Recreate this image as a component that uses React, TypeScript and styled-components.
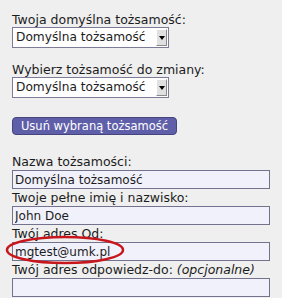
import React from 'react'
import styled, { createGlobalStyle } from 'styled-components'

const GlobalStyle = createGlobalStyle`
  html, body {
    margin: 0;
    padding: 0;
    background: #efefef;
  }
  body {
    font-family: "DejaVu Sans", Verdana, sans-serif;
    font-size: 12.5px;
    color: #1c1c1c;
  }
`

const Form = styled.form`
  position: relative;
  width: 282px;
  height: 298px;
  box-sizing: border-box;
  padding: 13px 0 0 12px;
  overflow: hidden;
`

const Label = styled.label<{ $gap?: number }>`
  display: block;
  line-height: 14px;
  margin-top: ${props => props.$gap ?? 0}px;
  white-space: nowrap;
`

const Hint = styled.em`
  font-style: italic;
`

const SelectBox = styled.div`
  display: flex;
  align-items: center;
  justify-content: space-between;
  width: 157px;
  height: 21px;
  box-sizing: border-box;
  border: 1px solid #7c7c98;
  background: #fff;
  padding: 0 1px 0 3px;
`

const SelectText = styled.span`
  font-size: 12.2px;
  line-height: 19px;
  white-space: nowrap;
`

const ArrowButton = styled.span`
  display: flex;
  align-items: center;
  justify-content: center;
  width: 11px;
  height: 17px;
  box-sizing: border-box;
  background: #e0e0e0;
  border: 1px solid;
  border-color: #ffffff #8a8a8a #8a8a8a #ffffff;

  &::after {
    content: '';
    border-left: 3px solid transparent;
    border-right: 3px solid transparent;
    border-top: 4px solid #000;
  }
`

const Button = styled.button`
  display: block;
  margin-top: 19px;
  width: 165px;
  height: 18px;
  padding: 0;
  border: 1px solid #45457e;
  border-radius: 4px;
  background: #5f5fa9;
  color: #fff;
  font-family: "DejaVu Sans", Verdana, sans-serif;
  font-size: 11.5px;
  line-height: 16px;
  text-align: center;
`

const Field = styled.input`
  display: block;
  margin-top: 1px;
  width: 258px;
  height: 19px;
  box-sizing: border-box;
  border: 1px solid #73738f;
  background: #f1f1fb;
  padding: 0 2px;
  font-family: "DejaVu Sans", Verdana, sans-serif;
  font-size: 12px;
  color: #1c1c1c;
  outline: none;
`

const Circle = styled.svg`
  position: absolute;
  left: 4px;
  top: 234px;
`

const Select = ({ text }: { text: string }) => (
  <SelectBox>
    <SelectText>{text}</SelectText>
    <ArrowButton />
  </SelectBox>
)

export default function App() {
  return (
    <>
      <GlobalStyle />
      <Form>
        <Label>Twoja domyślna tożsamość:</Label>
        <Select text="Domyślna tożsamość" />

        <Label $gap={15}>Wybierz tożsamość do zmiany:</Label>
        <Select text="Domyślna tożsamość" />

        <Button type="button">Usuń wybraną tożsamość</Button>

        <Label $gap={20}>Nazwa tożsamości:</Label>
        <Field readOnly value="Domyślna tożsamość" />
        <Label $gap={2}>Twoje pełne imię i nazwisko:</Label>
        <Field readOnly value="John Doe" />
        <Label $gap={2}>Twój adres Od:</Label>
        <Field readOnly value="mgtest@umk.pl" />
        <Label $gap={2}>
          Twój adres odpowiedz-do: <Hint>(opcjonalne)</Hint>
        </Label>
        <Field readOnly value="" />

        <Circle width="122" height="32" viewBox="0 0 122 32">
          <ellipse cx="61" cy="16" rx="58" ry="13" fill="none" stroke="#c8161d" strokeWidth="2.5" />
        </Circle>
      </Form>
    </>
  )
}
